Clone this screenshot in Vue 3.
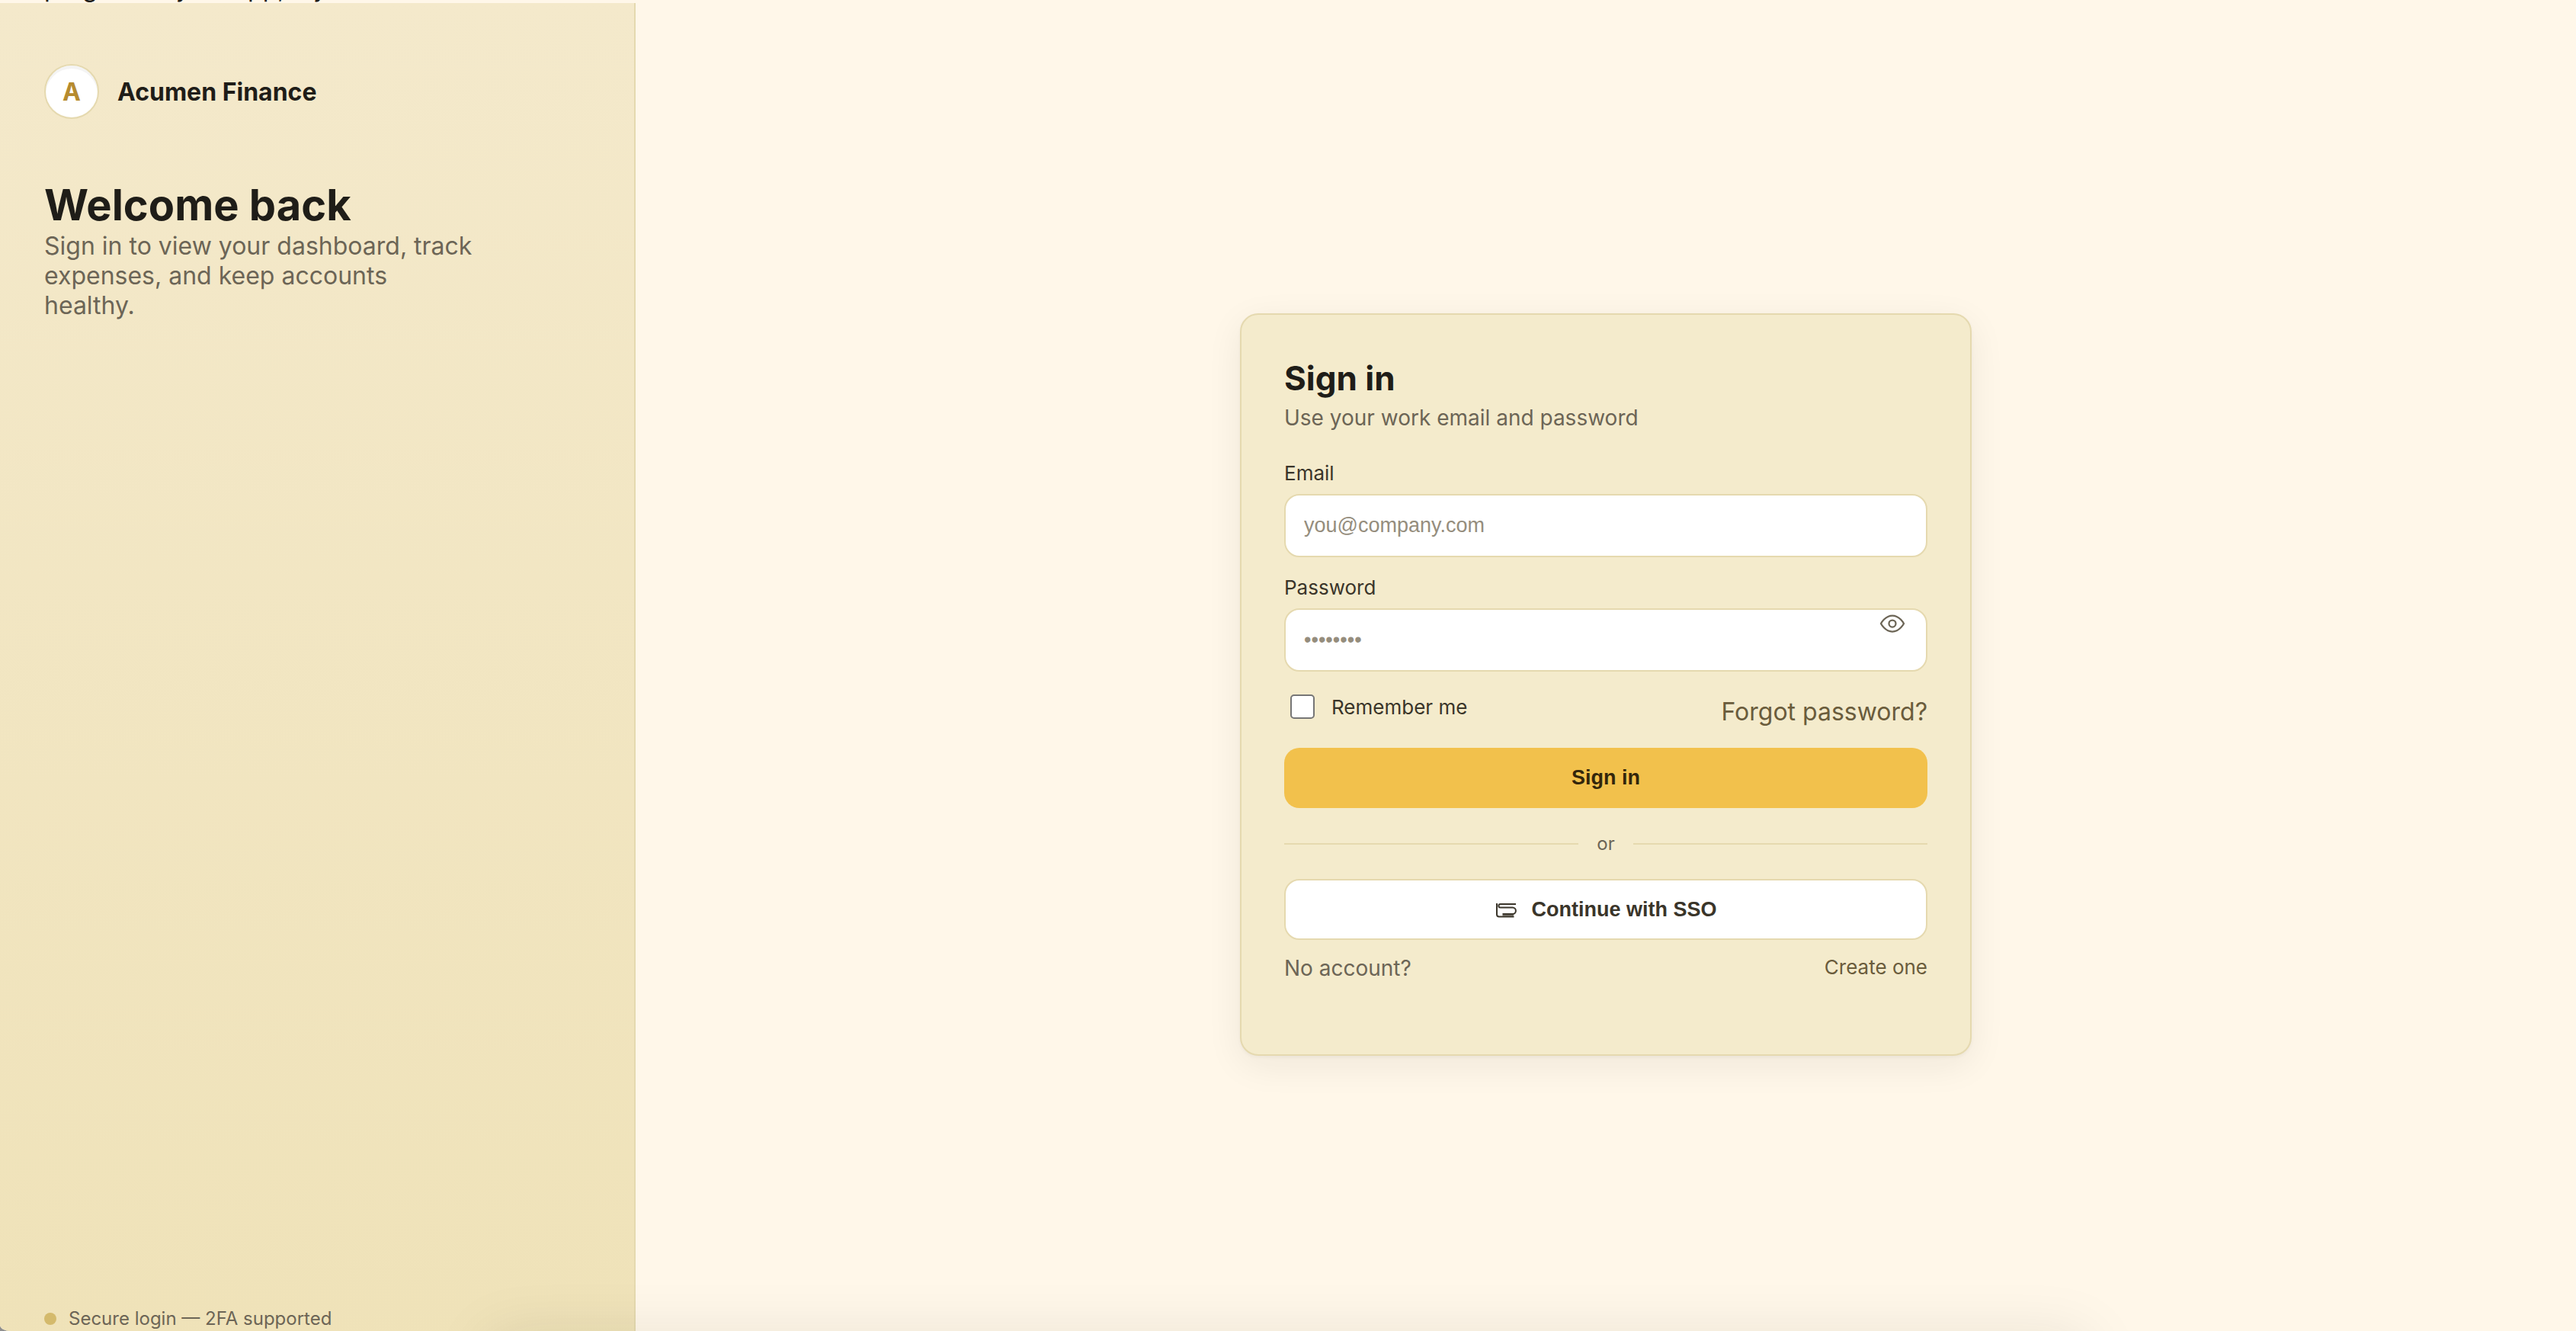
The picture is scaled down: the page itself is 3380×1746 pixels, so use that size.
<script setup>
import { ref } from 'vue'

const email = ref('')
const password = ref('')
const remember = ref(false)
const showPassword = ref(false)
</script>

<template>
  <div class="page">
    <p class="intro">program in your app, if you</p>
    <div class="shell">
      <aside class="side">
        <div class="brand">
          <span class="logo">A</span>
          <span class="brand-name">Acumen Finance</span>
        </div>
        <h1>Welcome back</h1>
        <p class="lead">Sign in to view your dashboard, track expenses, and keep accounts healthy.</p>
        <p class="secure"><span class="dot"></span>Secure login — 2FA supported</p>
      </aside>

      <main class="content">
        <form class="card" @submit.prevent>
          <header>
            <h2>Sign in</h2>
            <p class="hint">Use your work email and password</p>
          </header>

          <div class="field">
            <label for="email">Email</label>
            <input id="email" v-model="email" type="email" placeholder="you@company.com" />
          </div>

          <div class="field">
            <label for="password">Password</label>
            <div class="control">
              <input
                id="password"
                v-model="password"
                :type="showPassword ? 'text' : 'password'"
                placeholder="••••••••"
              />
              <button
                type="button"
                class="reveal"
                aria-label="Show password"
                @click="showPassword = !showPassword"
              >
                <svg viewBox="0 0 24 24" width="36" height="36">
                  <path d="M2 12s3.5-7 10-7 10 7 10 7-3.5 7-10 7S2 12 2 12z" />
                  <circle cx="12" cy="12" r="3" />
                </svg>
              </button>
            </div>
          </div>

          <div class="options">
            <label class="remember">
              <input v-model="remember" type="checkbox" />
              <span>Remember me</span>
            </label>
            <a class="forgot" href="#">Forgot password?</a>
          </div>

          <button type="submit" class="btn primary">Sign in</button>

          <div class="divider"><span>or</span></div>

          <button type="button" class="btn sso">
            <svg viewBox="0 0 28 22" width="28" height="22">
              <path class="soft" d="M9.5 18.8h14.5" />
              <path d="M2 3v14.5q0 3 3 3h19.5" />
              <path d="M27 4H6.7a2.3 2.3 0 0 0 0 4.6h16a4.2 4.2 0 0 1 0 8.4H9.5" />
            </svg>
            Continue with SSO
          </button>

          <footer class="signup">
            <span>No account?</span>
            <a href="#">Create one</a>
          </footer>
        </form>
      </main>
    </div>
    <div class="dock-shadow"></div>
  </div>
</template>

<style>
body {
  margin: 0;
  background: #8f8f8f;
}
</style>

<style scoped>
.page {
  position: relative;
  height: 100vh;
  overflow: hidden;
  border-bottom-left-radius: 14px 8px;
  background: #fff7e9;
  color: #1f1d18;
  font: 32px "Inter", sans-serif;
}
h1,
h2,
p {
  margin: 0;
}
a {
  color: #6a5c3c;
  text-decoration: none;
}
.intro {
  display: flex;
  align-items: flex-end;
  height: 4px;
  padding-left: 58px;
  overflow: hidden;
  line-height: 38px;
}
.shell {
  display: grid;
  grid-template-columns: 834px 1fr;
  height: calc(100vh + 42px);
}
.side {
  display: flex;
  flex-direction: column;
  box-sizing: border-box;
  padding: 80px 56px 48px 58px;
  border-right: 2px solid #e5d9af;
  background: linear-gradient(#f4e9cb, #efe2b8);
}
.brand {
  display: flex;
  align-items: center;
  gap: 24px;
  margin-bottom: 79px;
  font-weight: 700;
}
.logo {
  display: grid;
  place-items: center;
  box-sizing: border-box;
  width: 72px;
  height: 72px;
  border: 2px solid #e5d9af;
  border-radius: 50%;
  background: #fff;
  box-shadow: inset 0 4px 0 #f4f4f4;
  color: #b68b2f;
}
h1 {
  font-size: 56px;
  line-height: 68px;
}
.lead {
  max-width: 568px;
  color: #6c6556;
  line-height: 39px;
}
.secure {
  display: flex;
  align-items: center;
  gap: 16px;
  margin-top: auto;
  color: #6c6556;
  font-size: 24px;
}
.dot {
  width: 16px;
  height: 16px;
  border-radius: 50%;
  background: #d4ba6c;
}
.content {
  display: grid;
  place-items: center;
}
.card {
  display: flex;
  flex-direction: column;
  gap: 24px;
  box-sizing: border-box;
  width: 960px;
  padding: 56px 56px 96px;
  border: 2px solid #e5d9af;
  border-radius: 24px;
  background: #f4ebcc;
  box-shadow: 0 2px 4px rgba(31, 29, 24, 0.04), 0 12px 48px rgba(31, 29, 24, 0.07);
}
.card header {
  margin-bottom: 16px;
}
h2 {
  margin-bottom: 8px;
  font-size: 44px;
  line-height: 54px;
}
.hint {
  color: #6c6556;
  font-size: 28px;
  line-height: 34px;
}
.field {
  display: flex;
  flex-direction: column;
  gap: 12px;
}
.field label,
.remember {
  color: #3a352a;
  font-size: 26px;
  line-height: 31px;
}
.field input {
  box-sizing: border-box;
  width: 100%;
  height: 83px;
  padding: 0 24px;
  border: 2px solid #e5d9af;
  border-radius: 20px;
  background: #fff;
  color: #3a352a;
  font: 27px "Liberation Sans", Arial, sans-serif;
}
.field input::placeholder {
  color: #958d7d;
}
.control {
  position: relative;
  display: flex;
}
.reveal {
  position: absolute;
  top: 2px;
  right: 28px;
  display: flex;
  padding: 0;
  border: 0;
  background: none;
}
svg {
  fill: none;
  stroke: #6c6556;
  stroke-width: 1.5;
}
.options {
  display: flex;
  justify-content: space-between;
  height: 48px;
  padding-bottom: 4px;
}
.remember {
  display: flex;
  align-items: center;
  gap: 22px;
  height: 44px;
  padding-left: 8px;
}
.remember input {
  appearance: none;
  box-sizing: border-box;
  width: 32px;
  height: 32px;
  margin: 0;
  border: 2px solid #767676;
  border-radius: 5px;
  background: #fff;
}
.remember input:checked {
  background: #f2c14c;
}
.forgot {
  align-self: flex-end;
  line-height: 39px;
}
.btn {
  display: flex;
  align-items: center;
  justify-content: center;
  gap: 20px;
  height: 80px;
  padding: 0;
  border: 0;
  border-radius: 20px;
  font: bold 27px "Liberation Sans", Arial, sans-serif;
}
.primary {
  height: 79px;
  background: #f2c14c;
  color: #33260b;
}
.sso {
  border: 2px solid #e5d9af;
  background: #fff;
  color: #3a352a;
}
.sso svg {
  stroke: #3a352a;
  stroke-width: 2;
}
.sso .soft {
  stroke: #77736a;
}
.divider {
  display: flex;
  align-items: center;
  gap: 24px;
  margin: 8px 0;
  color: #6c6556;
  font-size: 24px;
  line-height: 29px;
}
.divider::before,
.divider::after {
  content: "";
  flex: 1;
  height: 2px;
  background: #e5d9af;
}
.signup {
  display: flex;
  align-items: flex-start;
  justify-content: space-between;
  margin-top: -4px;
  color: #6c6556;
  font-size: 28px;
  line-height: 34px;
}
.signup a {
  font-size: 26px;
  line-height: 31px;
}
/* soft shade cast along the bottom edge by the panel below the fold */
.dock-shadow {
  position: absolute;
  top: 100%;
  right: 19%;
  left: 19%;
  height: 80px;
  box-shadow: 0 8px 80px rgba(31, 29, 24, 0.1);
}
</style>
